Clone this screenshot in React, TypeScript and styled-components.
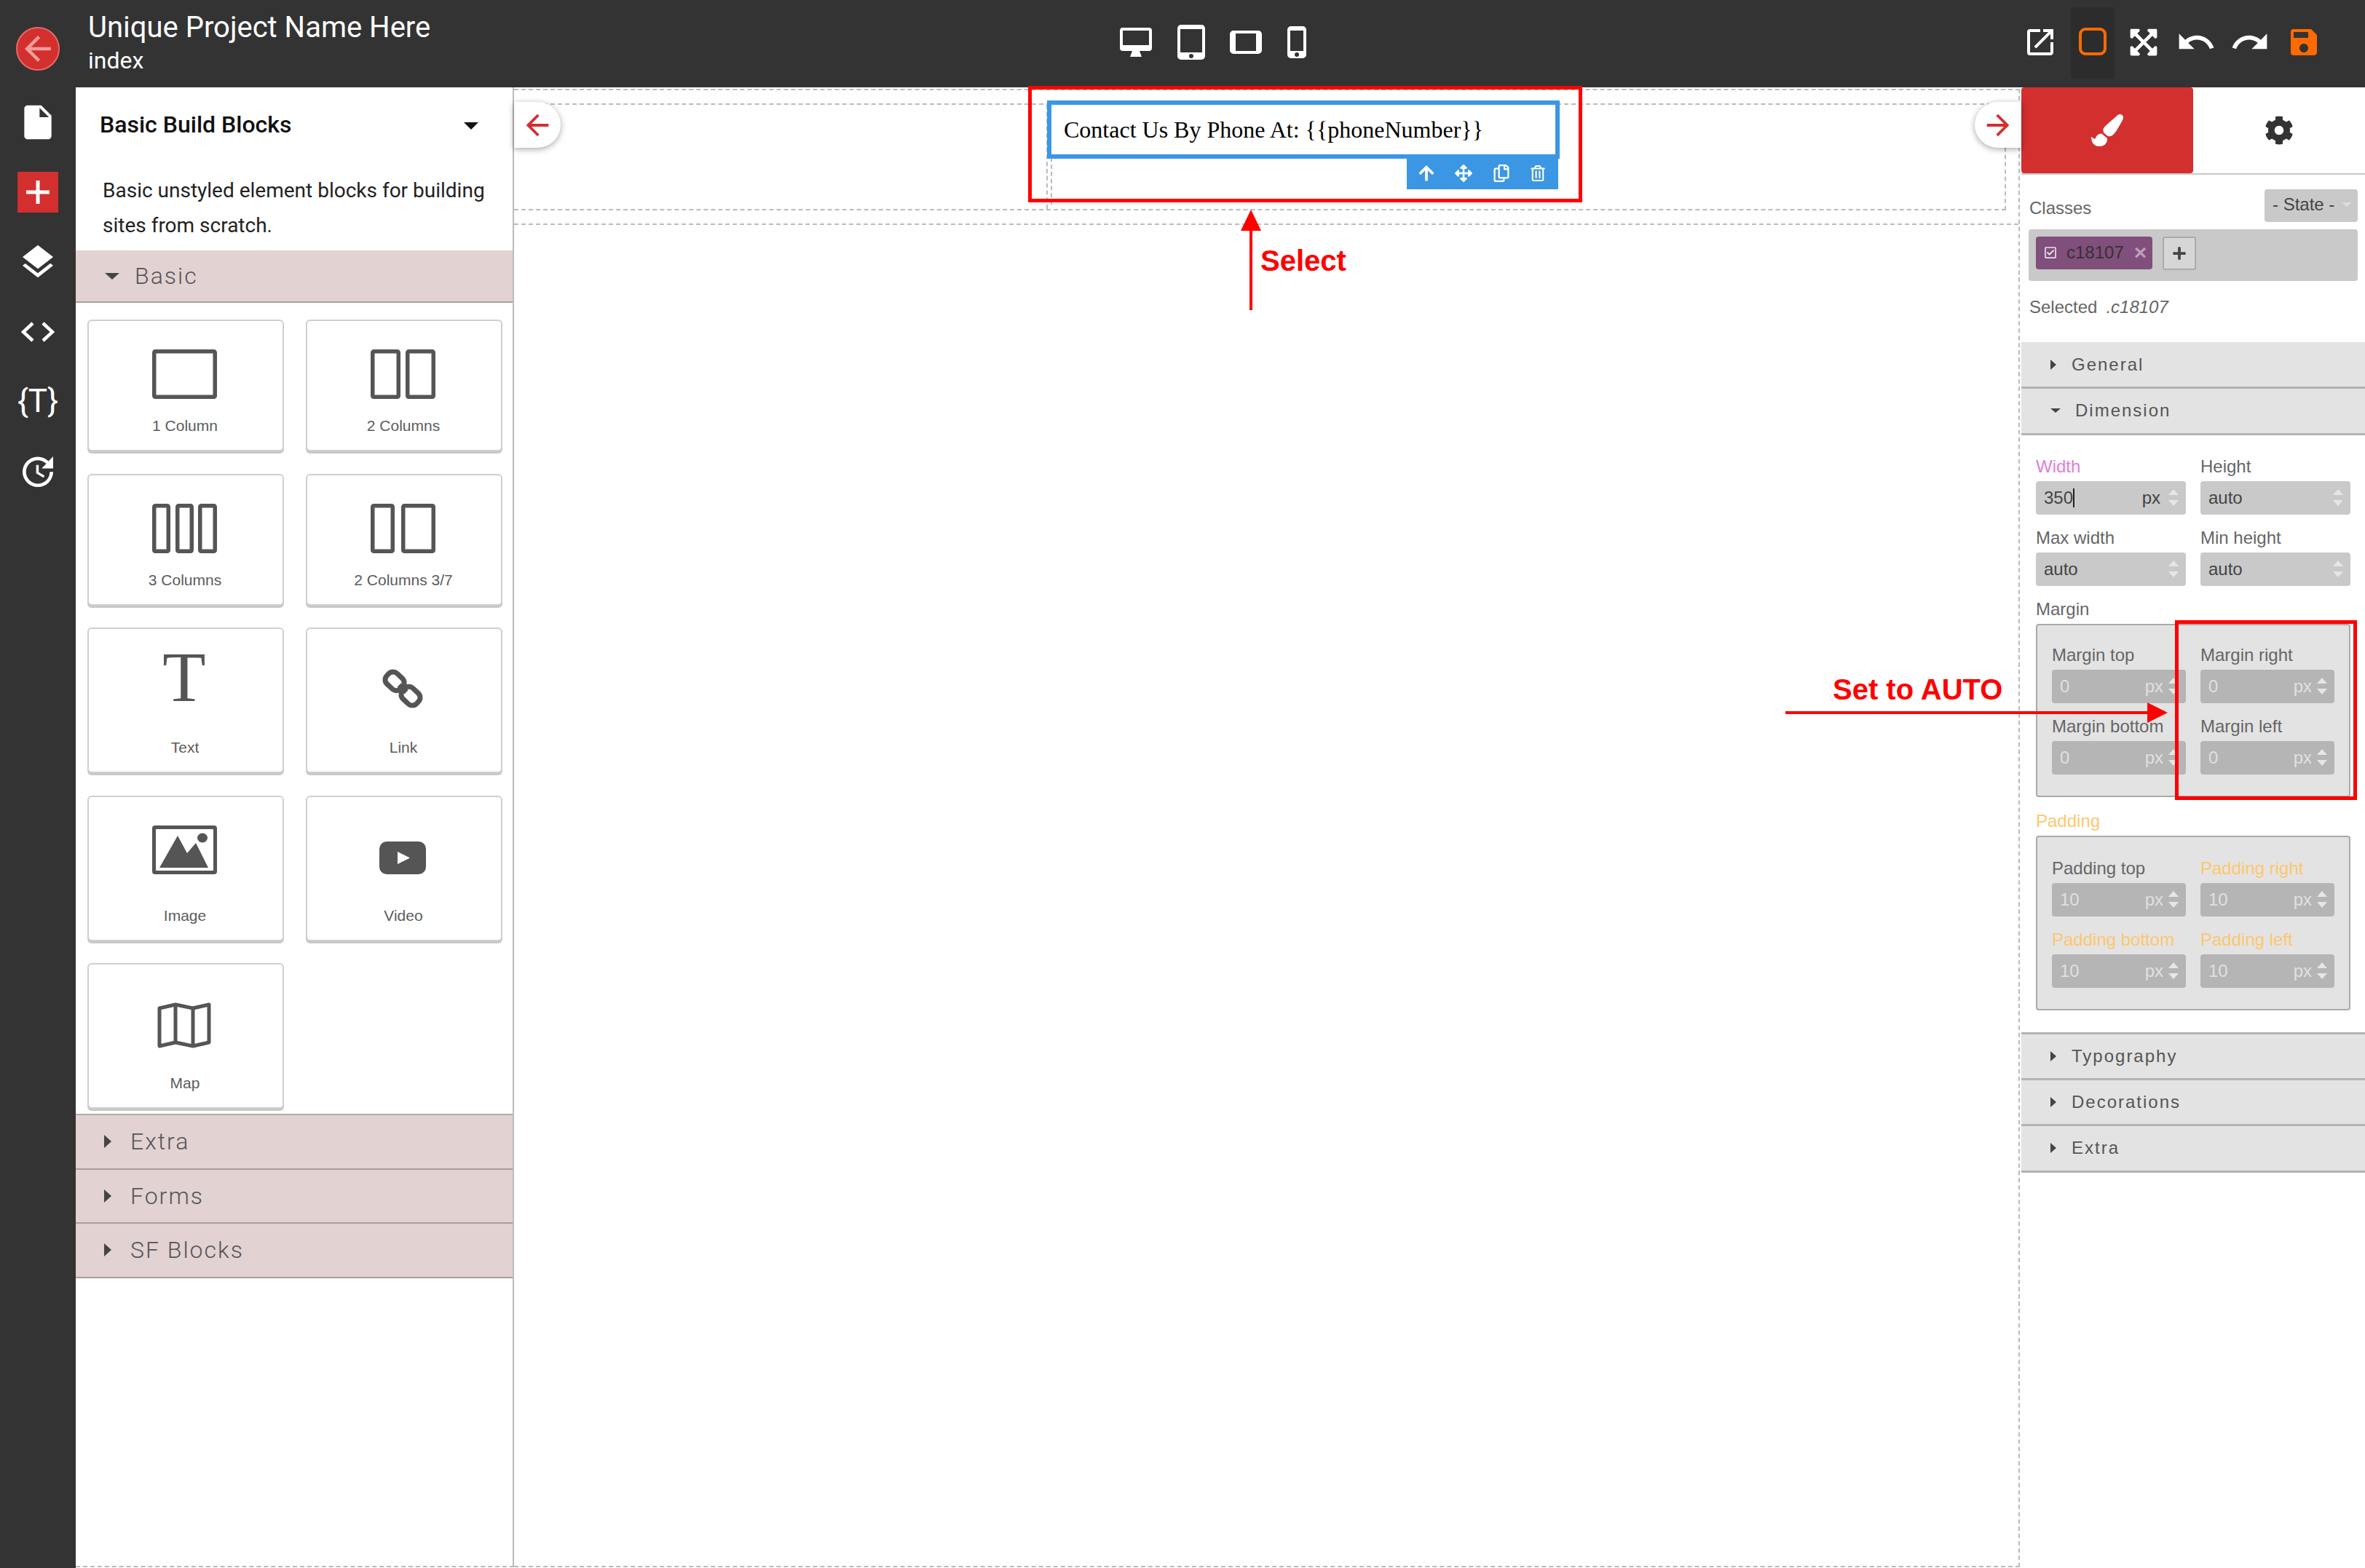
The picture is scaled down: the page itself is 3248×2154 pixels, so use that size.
import styled, { createGlobalStyle } from 'styled-components'
import {
  MdArrowBack,
  MdArrowForward,
  MdInsertDriveFile,
  MdLayers,
  MdOpenInNew,
  MdRedo,
  MdSave,
  MdUndo,
  MdUpdate,
} from 'react-icons/md'
import {
  FaArrowUp,
  FaArrowsAlt,
  FaCog,
  FaExpandArrowsAlt,
  FaPaintBrush,
  FaPlus,
  FaRegCheckSquare,
  FaRegCopy,
  FaRegTrashAlt,
} from 'react-icons/fa'

const GlobalStyle = createGlobalStyle`
  html, body {
    margin: 0;
    padding: 0;
    background: #fff;
  }
  * {
    box-sizing: border-box;
  }
`

const Page = styled.div`
  position: relative;
  width: 3248px;
  height: 2154px;
  display: flex;
  overflow: hidden;
  font-family: Roboto, sans-serif;
  background: #fff;
`

/* left rail */

const Rail = styled.nav`
  width: 104px;
  flex: none;
  display: flex;
  flex-direction: column;
  align-items: center;
  background: #333;
  color: #fff;
`

const BackButton = styled.div`
  width: 60px;
  height: 60px;
  margin: 37px 0 23px;
  display: flex;
  align-items: center;
  justify-content: center;
  border-radius: 50%;
  background: #d32f2f;
  border: 2px solid #e56a66;
  color: #f49c98;
`

const RailItem = styled.div`
  width: 100%;
  height: 96px;
  display: flex;
  align-items: center;
  justify-content: center;
  color: #fff;
`

const AddBox = styled.div`
  width: 56px;
  height: 56px;
  display: flex;
  align-items: center;
  justify-content: center;
  background: #d32f2f;
`

const TemplateGlyph = styled.span`
  margin-bottom: 2px;
  font-size: 44px;
  font-weight: 400;
  line-height: 1;
`

/* top bar */

const Main = styled.div`
  flex: 1;
  min-width: 0;
  display: flex;
  flex-direction: column;
`

const TopBar = styled.header`
  height: 120px;
  flex: none;
  display: grid;
  grid-template-columns: 1fr auto 1fr;
  align-items: center;
  padding-left: 17px;
  background: #333;
  color: #fff;
`

const ProjectInfo = styled.div`
  display: flex;
  flex-direction: column;
  margin-bottom: 4px;
`

const ProjectName = styled.div`
  font-size: 40px;
  line-height: 50px;
`

const PageName = styled.div`
  font-size: 32px;
  line-height: 40px;
`

const DeviceBar = styled.div`
  width: 256px;
  display: flex;
  align-items: center;
  justify-content: space-between;
  margin: 0 37px 4px 0;
`

const ActionBar = styled.div`
  display: flex;
  align-items: flex-start;
  justify-content: flex-end;
  height: 120px;
  padding: 10px 48px 0 0;
`

const ActionButton = styled.div<{ $w: number; $active?: boolean; $accent?: boolean }>`
  width: ${(p) => p.$w}px;
  height: 98px;
  display: flex;
  align-items: center;
  justify-content: center;
  margin-right: ${(p) => (p.$active ? 4 : 0)}px;
  border-radius: 4px;
  background: ${(p) => (p.$active ? '#2c2c2c' : 'transparent')};
  color: ${(p) => (p.$accent ? '#ff6a00' : '#fff')};

  svg {
    margin-bottom: 2px;
  }
`

const FrameSquare = styled.div`
  width: 38px;
  height: 38px;
  margin-bottom: 4px;
  border: 4px solid #ff6a00;
  border-radius: 9px;
`

const Workspace = styled.div`
  flex: 1;
  min-height: 0;
  display: flex;
`

/* block manager */

const BlocksPanel = styled.aside`
  width: 602px;
  height: 2033px;
  flex: none;
  display: flex;
  flex-direction: column;
  position: relative;
  border-bottom: 2px dashed #bbb;
  border-right: 2px solid #bbb;
  background: #fff;
`

const BlocksHeader = styled.div`
  height: 96px;
  display: flex;
  align-items: center;
  justify-content: space-between;
  padding: 6px 47px 0 33px;
  font-size: 32px;
  font-weight: 500;
  color: #111;
`

const HeaderCaret = styled.span`
  width: 0;
  height: 0;
  margin-top: 4px;
  border-left: 10px solid transparent;
  border-right: 10px solid transparent;
  border-top: 10px solid #111;
`

const BlocksIntro = styled.p`
  margin: 0;
  height: 128px;
  padding: 22px 30px 0 37px;
  font-size: 28px;
  line-height: 48px;
  color: #222;
`

const Category = styled.div<{ $open?: boolean }>`
  height: ${(p) => (p.$open ? 72 : 74.5)}px;
  flex: none;
  display: flex;
  align-items: center;
  gap: ${(p) => (p.$open ? 21 : 26)}px;
  padding-left: ${(p) => (p.$open ? 40 : 39)}px;
  background: #e2d2d2;
  border-bottom: 2px solid #a79f9f;
  font-size: 32px;
  font-weight: 300;
  letter-spacing: 2px;
  color: #555;
`

const Caret = styled.span<{ $open?: boolean; $size?: number; $color?: string }>`
  flex: none;
  width: 0;
  height: 0;
  ${(p) => {
    const s = p.$size ?? 10
    const c = p.$color ?? '#444'
    return p.$open
      ? `border-left: ${s}px solid transparent; border-right: ${s}px solid transparent; border-top: ${s - 1}px solid ${c};`
      : `border-top: ${s - 1}px solid transparent; border-bottom: ${s - 1}px solid transparent; border-left: ${s}px solid ${c};`
  }}
`

const BlockGrid = styled.div`
  display: grid;
  grid-template-columns: 270px 270px;
  grid-template-rows: 181px 181px 200px 200px 200px;
  column-gap: 30px;
  row-gap: 30.5px;
  padding: 23px 0 7px 16px;
  border-bottom: 2px solid #b3abab;
`

const BlockCard = styled.div`
  display: flex;
  flex-direction: column;
  align-items: center;
  padding-bottom: 20px;
  border: 2px solid #cfcfcf;
  border-radius: 6px;
  box-shadow: 0 3px 0 #c8c8c8;
  background: #fff;
  color: #555;
`

const BlockIcon = styled.div<{ $top: number }>`
  margin: ${(p) => p.$top}px 4px 0 0;
  display: flex;
  color: #555;
`

const BlockLabel = styled.div`
  margin: auto 2px 0 0;
  font-family: 'Liberation Sans', Arial, sans-serif;
  font-size: 21px;
  line-height: 26px;
  color: #5c5c5c;
`

const SerifGlyph = styled.span`
  display: block;
  font-family: 'Liberation Serif', 'Times New Roman', serif;
  font-size: 97px;
  line-height: 64px;
  height: 64px;
  color: #555;
`

/* canvas */

const Canvas = styled.main`
  position: relative;
  flex: 1;
  min-width: 0;
  background: #fff;
`

const BodyFrame = styled.div`
  height: 2031px;
  margin: 2px 2px 0 0;
  border: 2px dashed #bbb;
  border-left: none;
`

const Section = styled.section`
  padding: 18px 17px 18px 0;
  border-bottom: 2px dashed #bbb;
`

const Row = styled.div`
  height: 147px;
  display: flex;
  border: 2px dashed #bbb;
  border-left: none;
`

const Cell = styled.div`
  margin-left: 731px;
  padding-left: 4px;
  border-left: 2px dashed #bbb;
`

const InnerCell = styled.div`
  height: 100%;
  border-left: 2px dashed #bbb;
`

const Selected = styled.div`
  position: relative;
  width: 704px;
  height: 80px;
  margin: -6px 0 0 -7px;
  display: flex;
  align-items: center;
  padding-left: 17px;
  border: 6px solid #3b97e3;
  background: #fff;
  font-family: 'Liberation Serif', 'Times New Roman', serif;
  font-size: 32px;
  color: #000;
`

const Toolbar = styled.div`
  position: absolute;
  top: 74px;
  right: -4px;
  width: 208px;
  height: 42px;
  display: flex;
  align-items: center;
  justify-content: space-between;
  padding: 0 17px 3px 15px;
  background: #3b97e3;
  color: #fff;
`

const SidePill = styled.div<{ $side: 'left' | 'right' }>`
  position: absolute;
  top: 20px;
  ${(p) => p.$side}: 0;
  width: 64px;
  height: 63px;
  display: flex;
  align-items: center;
  justify-content: center;
  background: #fff;
  color: #d32f2f;
  border-radius: ${(p) => (p.$side === 'left' ? '0 32px 32px 0' : '32px 0 0 32px')};
  box-shadow: 0 2px 8px rgba(0, 0, 0, 0.35);
`

/* style manager */

const StylePanel = styled.aside`
  width: 472px;
  flex: none;
  display: flex;
  flex-direction: column;
  background: #fff;
  box-shadow: -2px 0 4px rgba(0, 0, 0, 0.08);
  font-family: 'Liberation Sans', Arial, sans-serif;
  font-size: 24px;
  color: #666;
`

const Tabs = styled.div`
  height: 120px;
  flex: none;
  display: flex;
  border-bottom: 2px solid #c8c8c8;
`

const Tab = styled.div<{ $active?: boolean }>`
  width: ${(p) => (p.$active ? '236px' : 'auto')};
  flex: ${(p) => (p.$active ? 'none' : '1')};
  display: flex;
  align-items: center;
  justify-content: center;
  border-radius: 4px;
  background: ${(p) => (p.$active ? '#d32f2f' : 'transparent')};
  color: ${(p) => (p.$active ? '#fff' : '#333')};
`

const ClassHeader = styled.div`
  display: flex;
  align-items: flex-end;
  justify-content: space-between;
  padding: 20px 10px 0 11px;
`

const ClassesLabel = styled.div`
  line-height: 28px;
  margin-bottom: 5px;
`

const StateSelect = styled.div`
  width: 128px;
  height: 45px;
  display: flex;
  align-items: center;
  gap: 10px;
  padding: 0 0 3px 11px;
  border-radius: 4px;
  background: #c9c9c9;
  color: #444;
`

const ClassBar = styled.div`
  height: 71px;
  margin: 10px 10px 0;
  display: flex;
  align-items: flex-start;
  padding: 10px;
  border-radius: 4px;
  background: #c9c9c9;
`

const ClassTag = styled.div`
  width: 160px;
  height: 45px;
  display: flex;
  align-items: center;
  padding: 0 0 2px 11px;
  border-radius: 4px;
  background: #804f7b;
  color: #333;
`

const TagName = styled.span`
  margin-left: 13px;
`

const TagClose = styled.span`
  margin-left: 14px;
  font-size: 30px;
  font-weight: 700;
  line-height: 1;
  color: #c09cbc;
`

const AddClass = styled.div`
  width: 46px;
  height: 46px;
  margin-left: 14px;
  display: flex;
  align-items: center;
  justify-content: center;
  border: 2px solid #aaa;
  border-radius: 3px;
  background: #d6d6d6;
  color: #444;
`

const SelectedLine = styled.div`
  height: 84px;
  padding: 22px 0 0 11px;
  line-height: 28px;
`

const SelectedName = styled.em`
  margin-left: 12px;
`

const Sector = styled.div<{ $open?: boolean; $top?: boolean; $h?: number }>`
  height: ${(p) => p.$h ?? 63.5}px;
  flex: none;
  display: flex;
  align-items: center;
  gap: ${(p) => (p.$open ? 20 : 21)}px;
  padding-left: 40px;
  background: #e3e3e3;
  border-bottom: 3px solid #b3b3b3;
  ${(p) => p.$top && 'border-top: 3px solid #b3b3b3;'}
  letter-spacing: 2px;
  color: #555;
`

const SectorBody = styled.div`
  padding: 29px 20px 0;
`

const FieldGrid = styled.div`
  display: grid;
  grid-template-columns: 206px 206px;
  column-gap: 20px;
  row-gap: 18px;
`

const Field = styled.div`
  display: flex;
  flex-direction: column;
  min-width: 0;
`

const FieldLabel = styled.div<{ $color?: string }>`
  height: 34px;
  line-height: 28px;
  white-space: nowrap;
  color: ${(p) => p.$color ?? '#666'};
`

const InputBox = styled.div<{ $muted?: boolean }>`
  height: 46px;
  display: flex;
  align-items: center;
  padding: 0 10px 0 11px;
  border-radius: 4px;
  background: ${(p) => (p.$muted ? '#b5b5b5' : '#c9c9c9')};
  color: ${(p) => (p.$muted ? '#e0e0e0' : '#444')};
`

const InputValue = styled.span`
  flex: 1;
  display: flex;
  align-items: center;
`

const TextCursor = styled.span`
  width: 2px;
  height: 26px;
  background: #222;
`

const Unit = styled.span<{ $muted?: boolean }>`
  margin-right: ${(p) => (p.$muted ? 7 : 11)}px;
`

const Spinner = styled.span`
  width: 14px;
  flex: none;
  display: flex;
  flex-direction: column;
  gap: 7px;

  &::before,
  &::after {
    content: '';
    width: 0;
    height: 0;
    border-left: 7px solid transparent;
    border-right: 7px solid transparent;
  }
  &::before {
    border-bottom: 8px solid #e6e6e6;
  }
  &::after {
    border-top: 8px solid #e6e6e6;
  }
`

const SpacingBox = styled.div<{ $top: number; $gap: number }>`
  margin-bottom: ${(p) => p.$gap}px;
  padding: ${(p) => p.$top}px 20px 29px;
  border: 2px solid #aaa;
  border-radius: 4px;
  background: #e3e3e3;
`

const SpacingGrid = styled.div`
  display: grid;
  grid-template-columns: 184px 184px;
  column-gap: 20px;
  row-gap: 18px;
`

const ClosedSectors = styled.div`
  margin-top: 12px;
  display: flex;
  flex-direction: column;
`

/* annotations */

const Mark = styled.div<{ $x: number; $y: number; $w: number; $h: number }>`
  position: absolute;
  left: ${(p) => p.$x}px;
  top: ${(p) => p.$y}px;
  width: ${(p) => p.$w}px;
  height: ${(p) => p.$h}px;
  border: 5px solid #f00;
  pointer-events: none;
`

const Note = styled.div<{ $x: number; $y: number }>`
  position: absolute;
  left: ${(p) => p.$x}px;
  top: ${(p) => p.$y}px;
  font-family: 'Liberation Sans', Arial, sans-serif;
  font-size: 40px;
  font-weight: 700;
  line-height: 46px;
  white-space: nowrap;
  color: #f00;
`

const UpArrow = styled.svg`
  position: absolute;
  left: 1702px;
  top: 288px;
`

const SideArrow = styled.svg`
  position: absolute;
  left: 2452px;
  top: 965px;
`

const rr = (x: number, y: number, w: number, h: number, r: number) =>
  `M${x + r} ${y}h${w - 2 * r}a${r} ${r} 0 0 1 ${r} ${r}v${h - 2 * r}a${r} ${r} 0 0 1 -${r} ${r}h-${w - 2 * r}a${r} ${r} 0 0 1 -${r} -${r}v-${h - 2 * r}a${r} ${r} 0 0 1 ${r} -${r}z`

function ColumnsIcon({ cols }: { cols: [number, number][] }) {
  return (
    <svg width="89" height="68" viewBox="0 0 89 68" fill="none" stroke="currentColor" strokeWidth="5.5">
      {cols.map(([x, w]) => (
        <rect key={x} x={x + 2.75} y="2.75" width={w - 5.5} height="62.5" rx="1.5" />
      ))}
    </svg>
  )
}

function LinkIcon() {
  return (
    <svg width="58" height="58" viewBox="0 0 58 58" fill="none" stroke="currentColor" strokeWidth="7">
      <g transform="rotate(43 29 29)">
        <rect x="1" y="19" width="26" height="20" rx="8" />
        <rect x="31" y="19" width="26" height="20" rx="8" />
        <path d="M22 29h14" />
      </g>
    </svg>
  )
}

function ImageIcon() {
  return (
    <svg width="89" height="67" viewBox="0 0 89 67">
      <rect x="2.5" y="2.5" width="84" height="62" rx="1.5" fill="none" stroke="currentColor" strokeWidth="5" />
      <path d="M10 58 35 14 48 38 60 24 77 58z" fill="currentColor" />
      <ellipse cx="69" cy="17" rx="7" ry="6.5" fill="currentColor" />
    </svg>
  )
}

function VideoIcon() {
  return (
    <svg width="64" height="45" viewBox="0 0 64 45">
      <rect width="64" height="45" rx="10" fill="currentColor" />
      <path d="M25 14v17l17-8.5z" fill="#fff" />
    </svg>
  )
}

function MapIcon() {
  return (
    <svg width="74" height="63" viewBox="0 0 74 63" fill="none" stroke="currentColor" strokeWidth="5">
      <path d="M3 8 25 3 49 8 71 3V55L49 60 25 55 3 60z" strokeLinejoin="round" />
      <path d="M25 3V55M49 8V60" />
    </svg>
  )
}

function DesktopIcon() {
  return (
    <svg width="44" height="40" viewBox="0 0 44 40">
      <path fillRule="evenodd" fill="#fff" d={rr(0, 0, 44, 32, 4) + rr(4, 4, 36, 20, 0.01)} />
      <path fill="#fff" d="M17 32h10l3 8H14z" />
    </svg>
  )
}

function TabletIcon() {
  return (
    <svg width="38" height="48" viewBox="0 0 38 48">
      <path fillRule="evenodd" fill="#fff" d={rr(0, 0, 38, 48, 5) + rr(4, 6, 30, 32, 0.01)} />
      <circle cx="19" cy="43" r="3" fill="#333" />
    </svg>
  )
}

function LandscapeIcon() {
  return (
    <svg width="44" height="32" viewBox="0 0 44 32">
      <path fillRule="evenodd" fill="#fff" d={rr(0, 0, 44, 32, 5) + rr(8, 4, 28, 24, 0.01)} />
    </svg>
  )
}

function PhoneIcon() {
  return (
    <svg width="26" height="44" viewBox="0 0 26 44">
      <path fillRule="evenodd" fill="#fff" d={rr(0, 0, 26, 44, 5) + rr(4, 6, 18, 28, 0.01)} />
      <circle cx="13" cy="39" r="3" fill="#333" />
    </svg>
  )
}

function CodeIcon() {
  return (
    <svg width="46" height="28" viewBox="0 0 46 28" fill="none" stroke="#fff" strokeWidth="4.5">
      <path d="M16 2 3 14l13 12M30 2l13 12-13 12" />
    </svg>
  )
}

function PlusIcon() {
  return (
    <svg width="34" height="34" viewBox="0 0 34 34" fill="none" stroke="#fff" strokeWidth="5">
      <path d="M17 1v32M1 17h32" />
    </svg>
  )
}

const blocks = [
  { label: '1 Column', top: 39, icon: <ColumnsIcon cols={[[0, 89]]} /> },
  { label: '2 Columns', top: 39, icon: <ColumnsIcon cols={[[0, 41], [48, 41]]} /> },
  { label: '3 Columns', top: 39, icon: <ColumnsIcon cols={[[0, 25], [32, 25], [63, 26]]} /> },
  { label: '2 Columns 3/7', top: 39, icon: <ColumnsIcon cols={[[0, 33], [42, 47]]} /> },
  { label: 'Text', top: 35, icon: <SerifGlyph>T</SerifGlyph> },
  { label: 'Link', top: 53, icon: <LinkIcon /> },
  { label: 'Image', top: 39, icon: <ImageIcon /> },
  { label: 'Video', top: 61, icon: <VideoIcon /> },
  { label: 'Map', top: 52, icon: <MapIcon /> },
]

const orange = '#fdc76d'

function Input({ value, unit, muted, cursor }: { value: string; unit?: boolean; muted?: boolean; cursor?: boolean }) {
  return (
    <InputBox $muted={muted}>
      <InputValue>
        {value}
        {cursor && <TextCursor />}
      </InputValue>
      {unit && <Unit $muted={muted}>px</Unit>}
      <Spinner />
    </InputBox>
  )
}

function SpacingField({ label, value, color }: { label: string; value: string; color?: string }) {
  return (
    <Field>
      <FieldLabel $color={color}>{label}</FieldLabel>
      <Input value={value} unit muted />
    </Field>
  )
}

export default function App() {
  return (
    <Page>
      <GlobalStyle />
      <Rail>
        <BackButton>
          <MdArrowBack size={54} />
        </BackButton>
        <RailItem>
          <MdInsertDriveFile size={56} />
        </RailItem>
        <RailItem>
          <AddBox>
            <PlusIcon />
          </AddBox>
        </RailItem>
        <RailItem>
          <MdLayers size={56} />
        </RailItem>
        <RailItem>
          <CodeIcon />
        </RailItem>
        <RailItem>
          <TemplateGlyph>{'{T}'}</TemplateGlyph>
        </RailItem>
        <RailItem>
          <MdUpdate size={56} />
        </RailItem>
      </Rail>

      <Main>
        <TopBar>
          <ProjectInfo>
            <ProjectName>Unique Project Name Here</ProjectName>
            <PageName>index</PageName>
          </ProjectInfo>
          <DeviceBar>
            <DesktopIcon />
            <TabletIcon />
            <LandscapeIcon />
            <PhoneIcon />
          </DeviceBar>
          <ActionBar>
            <ActionButton $w={84}>
              <MdOpenInNew size={48} />
            </ActionButton>
            <ActionButton $w={60} $active>
              <FrameSquare />
            </ActionButton>
            <ActionButton $w={72}>
              <FaExpandArrowsAlt size={42} />
            </ActionButton>
            <ActionButton $w={72}>
              <MdUndo size={56} />
            </ActionButton>
            <ActionButton $w={76}>
              <MdRedo size={56} />
            </ActionButton>
            <ActionButton $w={72} $accent>
              <MdSave size={48} />
            </ActionButton>
          </ActionBar>
        </TopBar>

        <Workspace>
          <BlocksPanel>
            <BlocksHeader>
              Basic Build Blocks
              <HeaderCaret />
            </BlocksHeader>
            <BlocksIntro>Basic unstyled element blocks for building sites from scratch.</BlocksIntro>
            <Category $open>
              <Caret $open />
              Basic
            </Category>
            <BlockGrid>
              {blocks.map((b) => (
                <BlockCard key={b.label}>
                  <BlockIcon $top={b.top}>{b.icon}</BlockIcon>
                  <BlockLabel>{b.label}</BlockLabel>
                </BlockCard>
              ))}
            </BlockGrid>
            <Category>
              <Caret />
              Extra
            </Category>
            <Category>
              <Caret />
              Forms
            </Category>
            <Category>
              <Caret />
              SF Blocks
            </Category>
          </BlocksPanel>

          <Canvas>
            <BodyFrame>
              <Section>
                <Row>
                  <Cell>
                    <InnerCell>
                      <Selected>
                        {'Contact Us By Phone At: {{phoneNumber}}'}
                        <Toolbar>
                          <FaArrowUp size={24} />
                          <FaArrowsAlt size={24} />
                          <FaRegCopy size={24} />
                          <FaRegTrashAlt size={22} />
                        </Toolbar>
                      </Selected>
                    </InnerCell>
                  </Cell>
                </Row>
              </Section>
            </BodyFrame>
            <SidePill $side="left">
              <MdArrowBack size={46} />
            </SidePill>
            <SidePill $side="right">
              <MdArrowForward size={46} />
            </SidePill>
          </Canvas>

          <StylePanel>
            <Tabs>
              <Tab $active>
                <FaPaintBrush size={44} />
              </Tab>
              <Tab>
                <FaCog size={40} />
              </Tab>
            </Tabs>
            <ClassHeader>
              <ClassesLabel>Classes</ClassesLabel>
              <StateSelect>
                - State -
                <Caret $open $size={7} $color="#ddd" />
              </StateSelect>
            </ClassHeader>
            <ClassBar>
              <ClassTag>
                <FaRegCheckSquare size={18} color="#e8dfe7" />
                <TagName>c18107</TagName>
                <TagClose>×</TagClose>
              </ClassTag>
              <AddClass>
                <FaPlus size={20} />
              </AddClass>
            </ClassBar>
            <SelectedLine>
              Selected
              <SelectedName>.c18107</SelectedName>
            </SelectedLine>
            <Sector $h={64}>
              <Caret $size={8} />
              General
            </Sector>
            <Sector $open>
              <Caret $open $size={7} />
              Dimension
            </Sector>
            <SectorBody>
              <FieldGrid>
                <Field>
                  <FieldLabel $color="#e07ee0">Width</FieldLabel>
                  <Input value="350" unit cursor />
                </Field>
                <Field>
                  <FieldLabel>Height</FieldLabel>
                  <Input value="auto" />
                </Field>
                <Field>
                  <FieldLabel>Max width</FieldLabel>
                  <Input value="auto" />
                </Field>
                <Field>
                  <FieldLabel>Min height</FieldLabel>
                  <Input value="auto" />
                </Field>
                <Field>
                  <FieldLabel>Margin</FieldLabel>
                </Field>
              </FieldGrid>
              <SpacingBox $top={27} $gap={19}>
                <SpacingGrid>
                  <SpacingField label="Margin top" value="0" />
                  <SpacingField label="Margin right" value="0" />
                  <SpacingField label="Margin bottom" value="0" />
                  <SpacingField label="Margin left" value="0" />
                </SpacingGrid>
              </SpacingBox>
              <FieldLabel $color={orange}>Padding</FieldLabel>
              <SpacingBox $top={29} $gap={18}>
                <SpacingGrid>
                  <SpacingField label="Padding top" value="10" />
                  <SpacingField label="Padding right" value="10" color={orange} />
                  <SpacingField label="Padding bottom" value="10" color={orange} />
                  <SpacingField label="Padding left" value="10" color={orange} />
                </SpacingGrid>
              </SpacingBox>
            </SectorBody>
            <ClosedSectors>
              <Sector $top $h={66}>
                <Caret $size={8} />
                Typography
              </Sector>
              <Sector>
                <Caret $size={8} />
                Decorations
              </Sector>
              <Sector>
                <Caret $size={8} />
                Extra
              </Sector>
            </ClosedSectors>
          </StylePanel>
        </Workspace>
      </Main>

      <Mark $x={1412} $y={118} $w={761} $h={160} />
      <Mark $x={2987} $y={852} $w={250} $h={247} />
      <Note $x={1731} $y={335}>Select</Note>
      <Note $x={2517} $y={924}>Set to AUTO</Note>
      <UpArrow width="32" height="138" viewBox="0 0 32 138">
        <path d="M16 0 2 29h12v109h4V29h12z" fill="#f00" />
      </UpArrow>
      <SideArrow width="526" height="28" viewBox="0 0 526 28">
        <path d="M0 12h497V0l28 14-28 14V16H0z" fill="#f00" />
      </SideArrow>
    </Page>
  )
}
